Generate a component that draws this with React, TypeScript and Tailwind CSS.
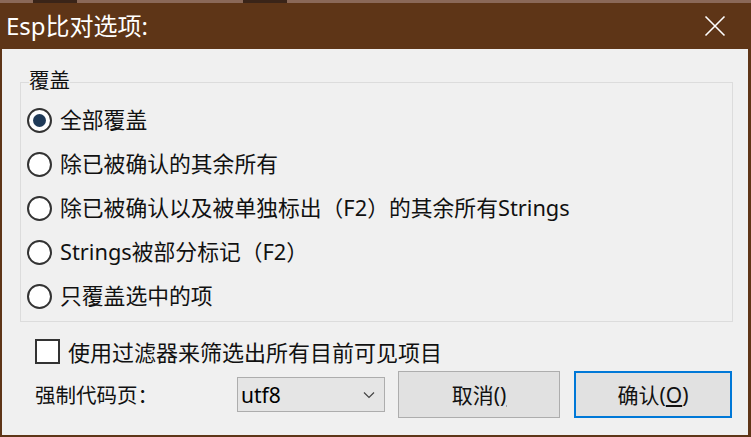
import React from "react";

function Radio({ checked, label }: { checked?: boolean; label: React.ReactNode }) {
  return (
    <div className="h-[44px] flex items-center pl-[6px] gap-[8px]">
      <div className="w-[25px] h-[25px] rounded-full border-[2.5px] border-[#333333] bg-[#ffffff] flex items-center justify-center shrink-0">
        {checked && <div className="w-[13px] h-[13px] rounded-full bg-[#1f3a58]" />}
      </div>
      <span className="text-[21.8px] leading-[28px] text-[#111111] whitespace-nowrap">{label}</span>
    </div>
  );
}

export default function App() {
  return (
    <div className="w-[751px] h-[437px] overflow-hidden bg-[#f0f0f0] flex flex-col font-[family-name:'Noto_Sans','Noto_Sans_CJK_SC',sans-serif]">
      <div className="h-[3px] bg-[#8a6858] flex shrink-0">
        <div className="w-[33px]" />
        <div className="w-[44px] bg-[#3a2418]" />
        <div className="w-[166px]" />
        <div className="w-[44px] bg-[#3a2418]" />
      </div>
      <div className="flex-1 flex flex-col border-l-2 border-r-[3px] border-b-2 border-[#5e3517]">
        <div className="h-[46px] bg-[#5e3517] flex items-center justify-between pl-[4px] pr-[22px] shrink-0">
          <span className="text-[24px] leading-[30px] text-white whitespace-nowrap">Esp比对选项:</span>
          <svg width="22" height="22" viewBox="0 0 22 22" className="block">
            <path d="M1.5 1.5 L20.5 20.5 M20.5 1.5 L1.5 20.5" stroke="#ffffff" strokeWidth="1.6" fill="none" />
          </svg>
        </div>
        <div className="flex-1 bg-[#f0f0f0] pl-[18px] pr-[15px] flex flex-col">
          <div className="mt-[33px] relative border border-[#dcdcdc] pt-[15px] pb-[3px]">
            <span className="absolute left-[8px] -top-[17px] text-[20.5px] leading-[28px] text-[#111111] bg-[#f0f0f0]">覆盖</span>
            <Radio checked label="全部覆盖" />
            <Radio label="除已被确认的其余所有" />
            <Radio label="除已被确认以及被单独标出（F2）的其余所有Strings" />
            <Radio label="Strings被部分标记（F2）" />
            <Radio label="只覆盖选中的项" />
          </div>
          <div className="mt-[17px] ml-[15px] h-[25px] flex items-center gap-[8px]">
            <div className="w-[25px] h-[25px] border-2 border-[#333333] bg-white shrink-0" />
            <span className="text-[22px] leading-[28px] text-[#111111] whitespace-nowrap">使用过滤器来筛选出所有目前可见项目</span>
          </div>
          <div className="mt-[7px] ml-[15px] h-[47px] flex items-center">
            <span className="w-[202px] text-[20.5px] leading-[28px] text-[#111111] whitespace-nowrap">强制代码页：</span>
            <div className="w-[148px] h-[35px] bg-[#e5e5e5] border border-[#adadad] flex items-center justify-between pl-[3px] pr-[9px]">
              <span className="text-[21px] leading-[28px] text-black">utf8</span>
              <svg width="12" height="8" viewBox="0 0 12 8" className="block">
                <path d="M1 1.5 L6 6.5 L11 1.5" stroke="#444444" strokeWidth="1.2" fill="none" />
              </svg>
            </div>
            <div className="ml-[13px] w-[162px] h-[47px] bg-[#e1e1e1] border border-[#adadad] flex items-center justify-center">
              <span className="text-[21px] leading-[28px] text-[#111111]">取消(<span className="underline">)</span></span>
            </div>
            <div className="ml-[14px] w-[158px] h-[47px] bg-[#e1e1e1] border-2 border-[#0078d7] flex items-center justify-center">
              <span className="text-[21px] leading-[28px] text-[#111111]">确认(<span className="underline">O</span>)</span>
            </div>
          </div>
        </div>
      </div>
    </div>
  );
}
